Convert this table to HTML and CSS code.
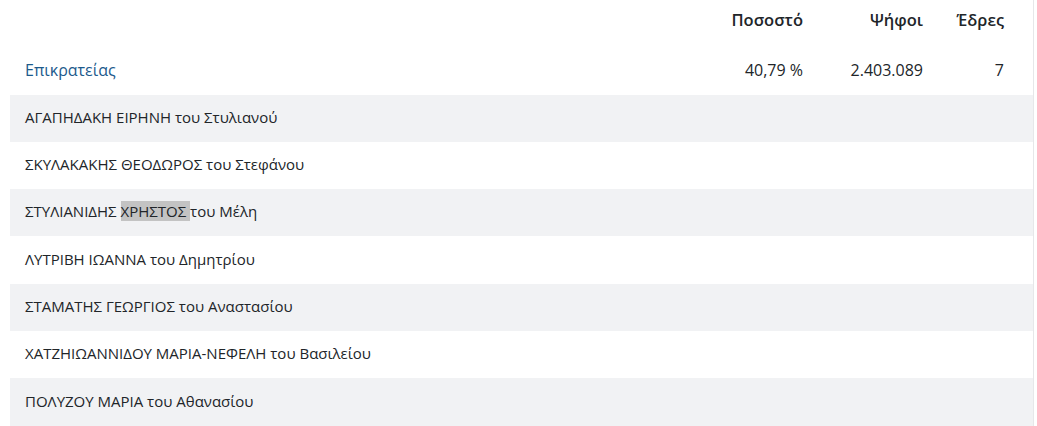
FILE: index.html
```html
<!DOCTYPE html>
<html lang="el">
<head>
<meta charset="utf-8">
<link rel="stylesheet" href="styles.css">
</head>
<body>
<div class="results">
  <div class="row head">
    <div class="cell name"></div>
    <div class="cell num pct">Ποσοστό</div>
    <div class="cell num votes">Ψήφοι</div>
    <div class="cell num seats">Έδρες</div>
  </div>
  <div class="row party">
    <div class="cell name link">Επικρατείας</div>
    <div class="cell num pct">40,79 %</div>
    <div class="cell num votes">2.403.089</div>
    <div class="cell num seats">7</div>
  </div>
  <div class="row cand alt"><div class="cell">ΑΓΑΠΗΔΑΚΗ ΕΙΡΗΝΗ του Στυλιανού</div></div>
  <div class="row cand"><div class="cell">ΣΚΥΛΑΚΑΚΗΣ ΘΕΟΔΩΡΟΣ του Στεφάνου</div></div>
  <div class="row cand alt"><div class="cell">ΣΤΥΛΙΑΝΙΔΗΣ <span class="mark">ΧΡΗΣΤΟΣ </span>του Μέλη</div></div>
  <div class="row cand"><div class="cell">ΛΥΤΡΙΒΗ ΙΩΑΝΝΑ του Δημητρίου</div></div>
  <div class="row cand alt"><div class="cell">ΣΤΑΜΑΤΗΣ ΓΕΩΡΓΙΟΣ του Αναστασίου</div></div>
  <div class="row cand"><div class="cell">ΧΑΤΖΗΙΩΑΝΝΙΔΟΥ ΜΑΡΙΑ-ΝΕΦΕΛΗ του Βασιλείου</div></div>
  <div class="row cand alt last"><div class="cell">ΠΟΛΥΖΟΥ ΜΑΡΙΑ του Αθανασίου</div></div>
</div>
</body>
</html>
```
FILE: styles.css
```css
html, body {
  margin: 0;
  padding: 0;
  background: #ffffff;
}
body {
  font-family: "Open Sans", "Noto Sans", sans-serif;
  font-size: 15px;
  color: #212529;
}
.results {
  margin-left: 10px;
  width: 1023px;
  border-right: 1px solid #e6e7e9;
}
.row {
  display: flex;
  align-items: center;
  height: 47.3px;
}
.head {
  font-weight: 600;
  font-size: 16.5px;
  align-items: flex-start;
  padding-top: 8px;
  box-sizing: border-box;
}
.cell {
  padding: 0 15px;
  white-space: nowrap;
}
.party .cell { padding-bottom: 1px; }
.cand .cell { padding-bottom: 3px; }
.name { flex: 1; }
.num { text-align: right; box-sizing: border-box; }
.pct { width: 120px; }
.votes { width: 120px; }
.seats { width: 95px; padding-right: 29px; }
.party .num { font-size: 16px; }
.link { color: #1c5a8c; font-size: 16px; }
.alt { background: #f1f2f4; }
.last { border-bottom: 2px solid #e3e4e6; box-sizing: content-box; }
.mark { background: #c3c3c3; }
```
